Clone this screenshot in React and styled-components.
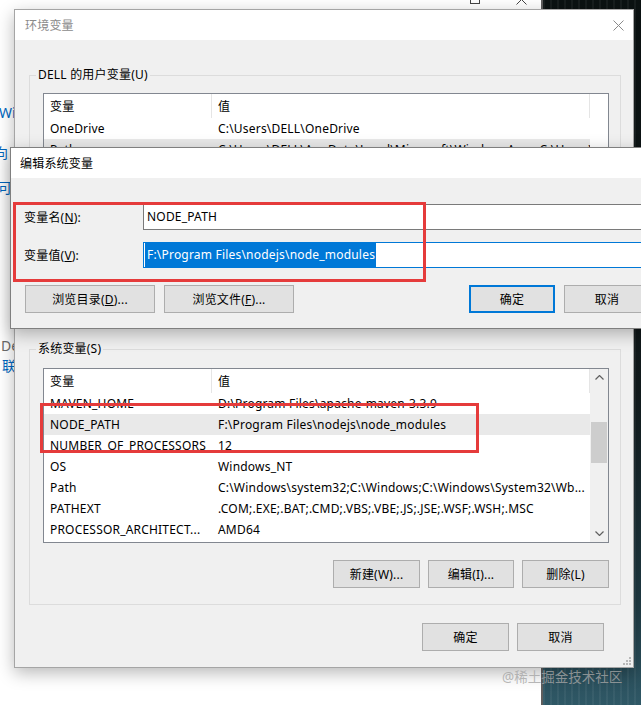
import React from "react";
import styled, { createGlobalStyle } from "styled-components";

const UI_FONT = `"Noto Sans", "Noto Sans CJK SC", sans-serif`;

const GlobalStyle = createGlobalStyle`
  html, body {
    margin: 0;
    padding: 0;
  }
  body {
    background: #fff;
    font-family: ${UI_FONT};
  }
  * {
    box-sizing: border-box;
  }
`;

const Desktop = styled.div`
  position: relative;
  width: 641px;
  height: 705px;
  overflow: hidden;
  display: flex;
  font-size: 12px;
  letter-spacing: 0.2px;
  color: #000;
`;

// the settings page behind the dialogs
const SettingsPage = styled.div`
  width: 543px;
  flex: none;
  border-right: 2px solid #5e5e5e;
  background: #fff;
  display: flex;
  flex-direction: column;
`;

const SettingsTop = styled.div`
  height: 9px;
  display: flex;
  justify-content: flex-end;
  gap: 36px;
  padding-right: 14px;
  overflow: hidden;
  svg {
    margin-top: -6px;
  }
`;

const SideLinks = styled.div`
  padding-top: 94px;
  display: flex;
  flex-direction: column;
  font-size: 14px;
  letter-spacing: 0;
`;

const SideLine = styled.div`
  height: 20px;
  line-height: 20px;
  white-space: nowrap;
  margin-top: ${(p) => p.$gap || 0}px;
  margin-left: ${(p) => p.$shift || 0}px;
  color: ${(p) => (p.$muted ? "#6b6b6b" : "#0067c0")};
`;

const Wallpaper = styled.div`
  flex: 1;
  background: repeating-linear-gradient(
      90deg,
      rgba(255, 255, 255, 0.05) 0 2px,
      transparent 2px 7px
    ),
    linear-gradient(180deg, #0b1212 0%, #121b1d 55%, #1f3a43 85%, #2f5866 100%);
`;

// dialogs
const Window = styled.section`
  position: absolute;
  left: ${(p) => p.$x}px;
  top: ${(p) => p.$y}px;
  width: ${(p) => p.$w}px;
  height: ${(p) => p.$h}px;
  border: 1px solid ${(p) => (p.$active ? "#7f7f7f" : "#a5a5a5")};
  background: #f0f0f0;
  box-shadow: 0 5px 16px rgba(0, 0, 0, 0.28);
  display: flex;
  flex-direction: column;
`;

const TitleBar = styled.header`
  height: 30px;
  flex: none;
  background: #fff;
  display: flex;
  align-items: center;
  justify-content: space-between;
  padding: 0 9px 0 ${(p) => p.$pad}px;
  color: ${(p) => (p.$active ? "#000" : "#8a8a8a")};
`;

const EnvBody = styled.div`
  flex: 1;
  display: flex;
  flex-direction: column;
  padding: 27px 12px 0 14px;
`;

const GroupBox = styled.fieldset`
  margin: ${(p) => p.$mt || 0}px 0 0 0;
  padding: ${(p) => p.$pt}px 11px 16px 13px;
  border: 1px solid #dcdcdc;
  min-width: 0;
`;

const Legend = styled.legend`
  font-size: 12px;
  line-height: 16px;
  padding: 0 2px;
  margin-left: -7px;
`;

const ListBox = styled.div`
  height: ${(p) => p.$h}px;
  border: 1px solid #828790;
  background: #fff;
  display: flex;
  overflow: hidden;
`;

const ListMain = styled.div`
  width: 546px;
  flex: none;
  display: flex;
  flex-direction: column;
`;

const Row = styled.div`
  display: grid;
  grid-template-columns: 168px 378px;
  height: ${(p) => (p.$head ? 24 : 21)}px;
  flex: none;
  background: ${(p) => (p.$selected ? "#e9e9e9" : "transparent")};
`;

const Cell = styled.div`
  padding-left: 6px;
  display: flex;
  align-items: center;
  white-space: nowrap;
  overflow: hidden;
  border-right: ${(p) => (p.$head ? "1px solid #e5e5e5" : "none")};
`;

const ScrollBar = styled.div`
  width: 18px;
  flex: none;
  background: #f0f0f0;
  display: flex;
  flex-direction: column;
`;

const ScrollArrow = styled.div`
  height: 17px;
  flex: none;
  display: flex;
  align-items: center;
  justify-content: center;
`;

const ScrollTrack = styled.div`
  flex: 1;
`;

const ScrollThumb = styled.div`
  width: 16px;
  margin: ${(p) => p.$offset}px 0 0 1px;
  height: ${(p) => p.$size}px;
  background: #cdcdcd;
`;

const ButtonRow = styled.div`
  display: flex;
  justify-content: flex-end;
  gap: ${(p) => p.$gap || 8}px;
  margin-top: ${(p) => p.$mt || 0}px;
  margin-right: ${(p) => p.$mr || 0}px;
  padding-left: ${(p) => p.$pl || 0}px;
`;

const Spacer = styled.div`
  flex: 1;
`;

const Button = styled.button`
  width: ${(p) => p.$w}px;
  height: 28px;
  padding: 0;
  background: #e1e1e1;
  border: ${(p) => (p.$default ? "2px solid #0078d7" : "1px solid #adadad")};
  font-family: ${UI_FONT};
  font-size: 12px;
  letter-spacing: inherit;
  color: #000;
`;

const EditBody = styled.div`
  flex: 1;
  display: flex;
  flex-direction: column;
  padding: 26px 11px 0 13px;
`;

const FieldRow = styled.div`
  display: flex;
  align-items: center;
  margin-top: ${(p) => p.$mt || 0}px;
`;

const FieldLabel = styled.label`
  width: 119px;
  flex: none;
`;

const TextBox = styled.div`
  flex: 1;
  height: 26px;
  background: #fff;
  border: 1px solid ${(p) => (p.$focused ? "#0078d7" : "#7a7a7a")};
  padding-left: 1px;
  display: flex;
`;

const TextValue = styled.span`
  line-height: 24px;
  padding: 0 1px 0 2px;
  white-space: nowrap;
  background: ${(p) => (p.$selected ? "#0078d7" : "transparent")};
  color: ${(p) => (p.$selected ? "#fff" : "#000")};
`;

const Grip = styled.svg`
  position: absolute;
  right: 2px;
  bottom: 2px;
`;

const Annotation = styled.div`
  position: absolute;
  left: ${(p) => p.$x}px;
  top: ${(p) => p.$y}px;
  width: ${(p) => p.$w}px;
  height: ${(p) => p.$h}px;
  border: 3px solid #e53b3b;
  pointer-events: none;
`;

const Watermark = styled.div`
  position: absolute;
  left: 502px;
  top: 668px;
  font-size: 13.5px;
  line-height: 18px;
  letter-spacing: 0;
  color: rgba(165, 165, 165, 0.8);
  white-space: nowrap;
`;

const CloseIcon = ({ color = "#8a8a8a" }) => (
  <svg width="11" height="11" viewBox="0 0 11 11">
    <path d="M0.5 0.5 L10.5 10.5 M10.5 0.5 L0.5 10.5" stroke={color} strokeWidth="1" fill="none" />
  </svg>
);

const Chevron = ({ down }) => (
  <svg width="9" height="5" viewBox="0 0 9 5">
    <path
      d={down ? "M0.5 0.5 L4.5 4.5 L8.5 0.5" : "M0.5 4.5 L4.5 0.5 L8.5 4.5"}
      stroke="#606060"
      strokeWidth="1.2"
      fill="none"
    />
  </svg>
);

const userVars = [
  ["OneDrive", "C:\\Users\\DELL\\OneDrive"],
  ["Path", "C:\\Users\\DELL\\AppData\\Local\\Microsoft\\WindowsApps;C:\\Users\\DELL\\A...", true],
  ["TEMP", "%USERPROFILE%\\AppData\\Local\\Temp"],
  ["TMP", "%USERPROFILE%\\AppData\\Local\\Temp"],
];

const systemVars = [
  ["MAVEN_HOME", "D:\\Program Files\\apache-maven-3.3.9"],
  ["NODE_PATH", "F:\\Program Files\\nodejs\\node_modules", true],
  ["NUMBER_OF_PROCESSORS", "12"],
  ["OS", "Windows_NT"],
  ["Path", "C:\\Windows\\system32;C:\\Windows;C:\\Windows\\System32\\Wb..."],
  ["PATHEXT", ".COM;.EXE;.BAT;.CMD;.VBS;.VBE;.JS;.JSE;.WSF;.WSH;.MSC"],
  ["PROCESSOR_ARCHITECT...", "AMD64"],
];

const VarList = ({ rows, height, scroll }) => (
  <ListBox $h={height}>
    <ListMain>
      <Row $head>
        <Cell $head>变量</Cell>
        <Cell $head>值</Cell>
      </Row>
      {rows.map(([name, value, selected]) => (
        <Row key={name} $selected={selected}>
          <Cell>{name}</Cell>
          <Cell>{value}</Cell>
        </Row>
      ))}
    </ListMain>
    {scroll && (
      <ScrollBar>
        <ScrollArrow>
          <Chevron />
        </ScrollArrow>
        <ScrollTrack>
          <ScrollThumb $offset={36} $size={41} />
        </ScrollTrack>
        <ScrollArrow>
          <Chevron down />
        </ScrollArrow>
      </ScrollBar>
    )}
  </ListBox>
);

const App = () => {
  return (
    <>
      <GlobalStyle />
      <Desktop>
        <SettingsPage>
          <SettingsTop>
            <svg width="10" height="10" viewBox="0 0 10 10">
              <rect x="0.5" y="0.5" width="9" height="9" stroke="#444" fill="none" />
            </svg>
            <CloseIcon color="#444" />
          </SettingsTop>
          <SideLinks>
            <SideLine $gap={0} $shift={-1}>Windows</SideLine>
            <SideLine $gap={20} $shift={-6}>向 Microsoft</SideLine>
            <SideLine $gap={15} $shift={-16}>许可</SideLine>
            <SideLine $gap={138} $shift={1} $muted>Default</SideLine>
            <SideLine $gap={0} $shift={2}>联系</SideLine>
          </SideLinks>
        </SettingsPage>
        <Wallpaper />

        <Window $x={14} $y={9} $w={620} $h={659}>
          <TitleBar $pad={10}>
            <span>环境变量</span>
            <CloseIcon />
          </TitleBar>
          <EnvBody>
            <GroupBox $pt={10}>
              <Legend>DELL 的用户变量(U)</Legend>
              <VarList rows={userVars} height={166} />
              <ButtonRow $mt={18}>
                <Button $w={87}>新建(N)...</Button>
                <Button $w={87}>编辑(E)...</Button>
                <Button $w={87}>删除(D)</Button>
              </ButtonRow>
            </GroupBox>
            <GroupBox $mt={19} $pt={11}>
              <Legend>系统变量(S)</Legend>
              <VarList rows={systemVars} height={175} scroll />
              <ButtonRow $mt={17}>
                <Button $w={87}>新建(W)...</Button>
                <Button $w={86}>编辑(I)...</Button>
                <Button $w={87}>删除(L)</Button>
              </ButtonRow>
            </GroupBox>
            <ButtonRow $mt={18} $mr={17}>
              <Button $w={87}>确定</Button>
              <Button $w={87}>取消</Button>
            </ButtonRow>
          </EnvBody>
          <Grip width="8" height="8" viewBox="0 0 8 8">
            <rect x="6" y="0" width="2" height="2" fill="#b8b8b8" />
            <rect x="3" y="3" width="2" height="2" fill="#b8b8b8" />
            <rect x="6" y="3" width="2" height="2" fill="#b8b8b8" />
            <rect x="0" y="6" width="2" height="2" fill="#b8b8b8" />
            <rect x="3" y="6" width="2" height="2" fill="#b8b8b8" />
            <rect x="6" y="6" width="2" height="2" fill="#b8b8b8" />
          </Grip>
        </Window>

        <Window $x={10} $y={147} $w={652} $h={182} $active>
          <TitleBar $pad={9} $active>
            <span>编辑系统变量</span>
          </TitleBar>
          <EditBody>
            <FieldRow>
              <FieldLabel>
                变量名(<u>N</u>):
              </FieldLabel>
              <TextBox>
                <TextValue>NODE_PATH</TextValue>
              </TextBox>
            </FieldRow>
            <FieldRow $mt={12}>
              <FieldLabel>
                变量值(<u>V</u>):
              </FieldLabel>
              <TextBox $focused>
                <TextValue $selected>F:\Program Files\nodejs\node_modules</TextValue>
              </TextBox>
            </FieldRow>
            <ButtonRow $mt={17} $gap={9} $pl={1}>
              <Button $w={130}>
                浏览目录(<u>D</u>)...
              </Button>
              <Button $w={130}>
                浏览文件(<u>F</u>)...
              </Button>
              <Spacer />
              <Button $w={86} $default>
                确定
              </Button>
              <Button $w={86}>取消</Button>
            </ButtonRow>
          </EditBody>
        </Window>

        <Annotation $x={13} $y={202} $w={413} $h={80} />
        <Annotation $x={40} $y={403} $w={439} $h={50} />
        <Watermark>@稀土掘金技术社区</Watermark>
      </Desktop>
    </>
  );
};

export default App;
